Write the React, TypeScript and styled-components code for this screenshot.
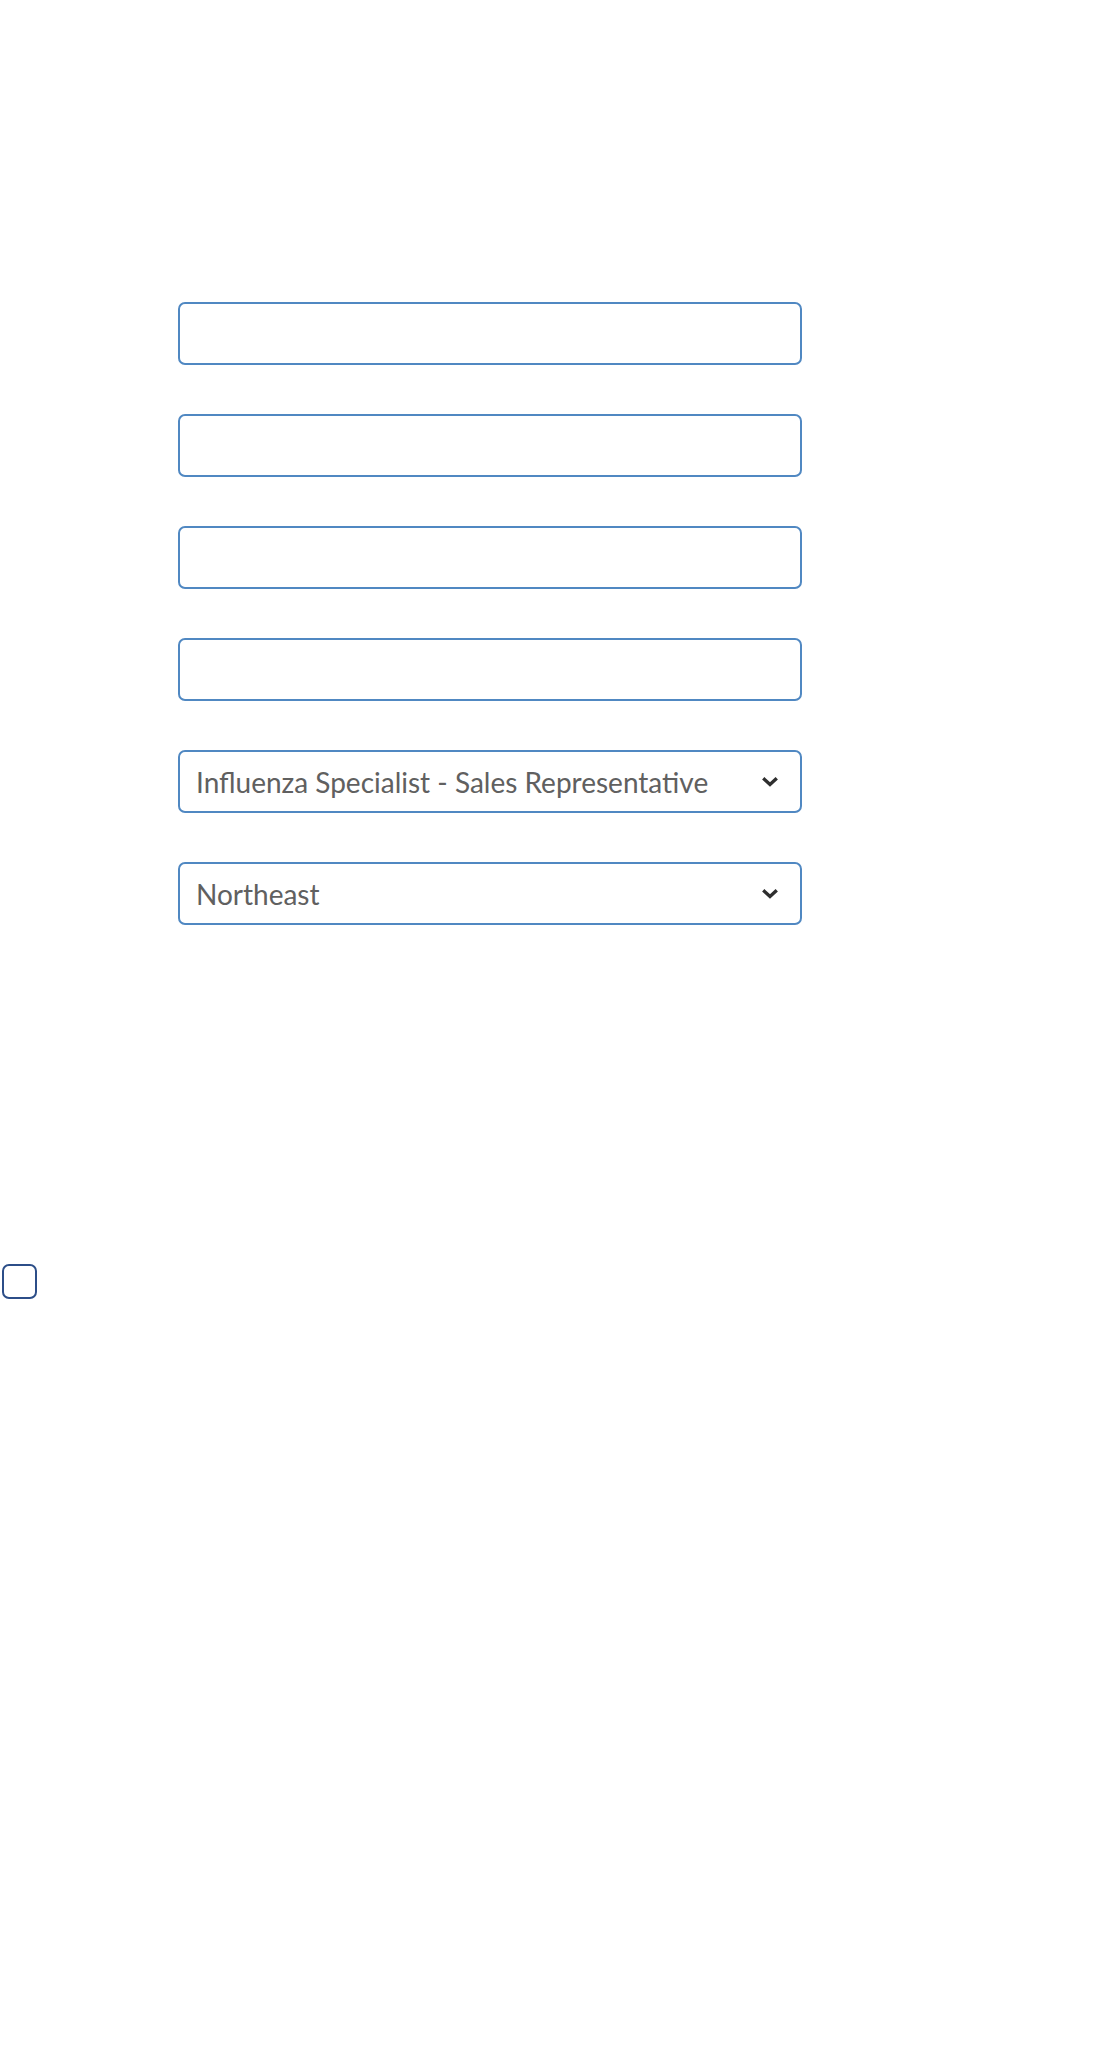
import React from 'react'
import styled, { createGlobalStyle } from 'styled-components'

const GlobalStyle = createGlobalStyle`
  html, body {
    margin: 0;
    padding: 0;
    background: #ffffff;
    font-family: Lato, "Open Sans", sans-serif;
  }
`

const Page = styled.div`
  min-height: 2060px;
  display: flex;
  flex-direction: column;
`

const Form = styled.form`
  display: flex;
  flex-direction: column;
  gap: 49px;
  width: 624px;
  margin: 302px 0 0 178px;
`

const fieldBase = `
  box-sizing: border-box;
  width: 100%;
  height: 63px;
  border: 2px solid #5088c2;
  border-radius: 7px;
  background: #ffffff;
  font-family: Lato, "Open Sans", sans-serif;
  font-size: 28px;
  color: #606060;
  outline: none;
`

const TextField = styled.input`
  ${fieldBase}
  padding: 0 16px;
`

const SelectWrap = styled.div`
  position: relative;
  width: 100%;
`

const SelectField = styled.select`
  ${fieldBase}
  appearance: none;
  padding: 0 56px 0 16px;
`

const Chevron = styled.svg`
  position: absolute;
  right: 24px;
  top: 50%;
  width: 16px;
  height: 10px;
  margin-top: -5px;
  pointer-events: none;
`

const ConsentRow = styled.div`
  margin-top: 339px;
  padding-left: 2px;
`

const Checkbox = styled.span`
  display: block;
  box-sizing: border-box;
  width: 35px;
  height: 35px;
  border: 2px solid #2c4e88;
  border-radius: 7px;
  background: #ffffff;
`

interface SelectProps {
  value: string
  options: string[]
}

const Select: React.FC<SelectProps> = ({ value, options }) => (
  <SelectWrap>
    <SelectField defaultValue={value}>
      {options.map((o) => (
        <option key={o}>{o}</option>
      ))}
    </SelectField>
    <Chevron viewBox="0 0 16 10">
      <path d="M2.5 2.5l5.5 5 5.5-5" fill="none" stroke="#2e2e2e" strokeWidth="3.4" strokeLinecap="square" />
    </Chevron>
  </SelectWrap>
)

const App: React.FC = () => (
  <Page>
    <GlobalStyle />
    <Form onSubmit={(e) => e.preventDefault()}>
      <TextField type="text" />
      <TextField type="text" />
      <TextField type="email" />
      <TextField type="tel" />
      <Select
        value="Influenza Specialist - Sales Representative"
        options={['Influenza Specialist - Sales Representative']}
      />
      <Select value="Northeast" options={['Northeast']} />
    </Form>
    <ConsentRow>
      <Checkbox />
    </ConsentRow>
  </Page>
)

export default App
